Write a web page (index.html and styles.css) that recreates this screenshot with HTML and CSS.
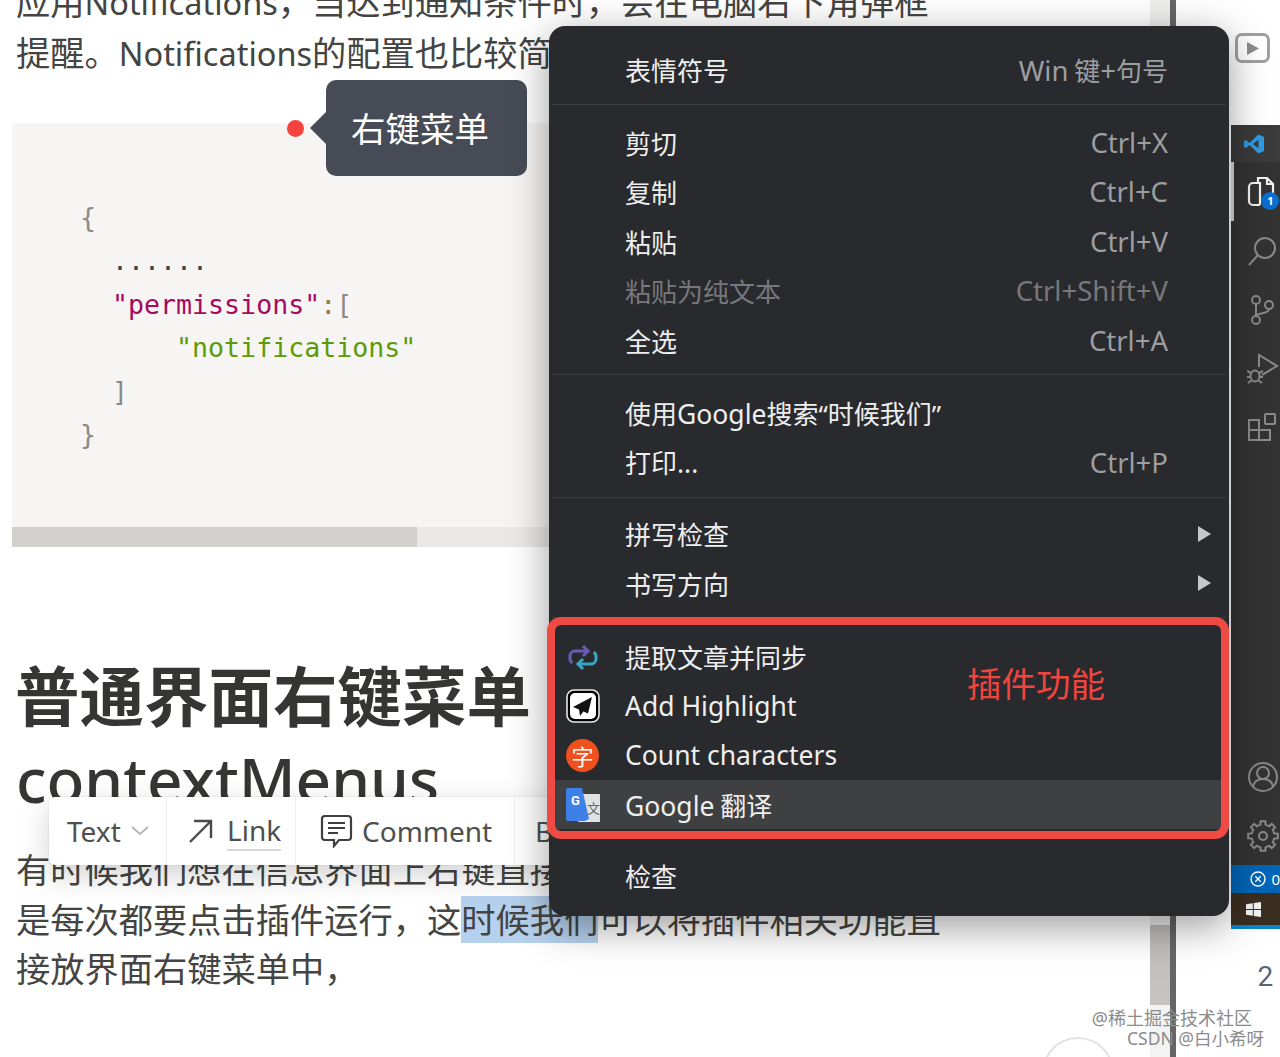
FILE: index.html
```html
<!DOCTYPE html>
<html lang="zh-CN">
<head>
    <meta charset="UTF-8">
    <meta name="viewport" content="width=device-width, initial-scale=1.0">
    <title>普通界面右键菜单 contextMenus</title>
    <link rel="stylesheet" href="styles.css">
</head>
<body>
    <div class="page">
        <main class="article">
            <p class="para">应用<span class="latin">Notifications</span>，当达到通知条件时，会在电脑右下角弹框<br>提醒。<span class="latin">Notifications</span>的配置也比较简单</p>

            <div class="code-block">
<pre class="code"><span class="punc">{</span>
  <span class="dots">......</span>
  <span class="key">"permissions"</span><span class="colon">:</span><span class="punc">[</span>
      <span class="str">"notifications"</span>
  <span class="punc">]</span>
<span class="punc">}</span></pre>
                <div class="code-scroll"><div class="code-thumb"></div></div>
            </div>

            <h2 class="title">普通界面右键菜单<br><span class="title-en">contextMenus</span></h2>

            <p class="para para-last">有时候我们想在信息界面上右键直接<br>是每次都要点击插件运行，这<span class="selected">时候我们</span>可以将插件相关功能直<br>接放界面右键菜单中，</p>
        </main>

        <div class="page-scroll"></div>
        <div class="divider"></div>

        <aside class="side">
            <div class="side-top">
                <div class="play-btn"><svg width="12" height="13" viewBox="0 0 12 13"><path d="M0 0l12 6.500-12 6.500z" fill="#8d8d8d"/></svg></div>
            </div>

            <nav class="vs-bar">
                <div class="vs-logo">
                    <svg width="20" height="20" viewBox="0 0 20 20"><path d="M14.5 0.5L20 3v14l-5.500 2.500L5.500 11 1.800 14 0 13V7l1.800-1 3.700 3zM14.500 5.500L9 10l5.500 4.500z" fill="#2f9be6"/></svg>
                </div>
                <div class="vs-icon vs-icon-active">
                    <svg width="28" height="32" viewBox="0 0 28 32" fill="none" stroke="#f2f2f2" stroke-width="2.200"><path d="M11 6V2h9l6 6v15H16"/><path d="M20 2v6h6"/><path d="M6 7h7v2a2 2 0 0 0 0 0v18a2 2 0 0 1-2 2H6a4 4 0 0 1-4-4V11a4 4 0 0 1 4-4z" fill="#333"/></svg>
                    <span class="vs-badge">1</span>
                </div>
                <div class="vs-icon">
                    <svg width="30" height="30" viewBox="0 0 30 30" fill="none" stroke="#8a8a8a" stroke-width="2"><circle cx="18" cy="12" r="10"/><path d="M11 19L2 29"/></svg>
                </div>
                <div class="vs-icon">
                    <svg width="30" height="30" viewBox="0 0 30 30" fill="none" stroke="#8a8a8a" stroke-width="2"><circle cx="9" cy="5" r="4"/><circle cx="9" cy="25" r="4"/><circle cx="22" cy="10" r="4"/><path d="M9 9v12M22 14c0 5-13 4-13 7"/></svg>
                </div>
                <div class="vs-icon">
                    <svg width="32" height="32" viewBox="0 0 32 32" fill="none" stroke="#8a8a8a" stroke-width="2"><path d="M12 14V2l18 11-15 9"/><ellipse cx="8" cy="23" rx="4.500" ry="5.500"/><path d="M0 18l4 2M0 24h4M1 30l4-3M16 18l-4 2M16 24h-4M15 30l-4-3"/></svg>
                </div>
                <div class="vs-icon">
                    <svg width="30" height="30" viewBox="0 0 30 30" fill="none" stroke="#8a8a8a" stroke-width="2"><path d="M2 7h10v20H2zM2 17h21v10H12"/><path d="M12 17V7"/><rect x="18" y="1" width="10" height="10" rx="1"/></svg>
                </div>
                <div class="vs-spacer"></div>
                <div class="vs-icon">
                    <svg width="32" height="32" viewBox="0 0 32 32" fill="none" stroke="#8a8a8a" stroke-width="2"><circle cx="16" cy="16" r="14"/><circle cx="16" cy="12" r="6"/><path d="M6 26c1-6 5-8 10-8s9 2 10 8"/></svg>
                </div>
                <div class="vs-icon">
                    <svg width="32" height="32" viewBox="0 0 32 32" fill="none" stroke="#8a8a8a" stroke-width="2">
                        <circle cx="16" cy="16" r="4"/>
                        <path id="gear-tooth" d="M11.600 5.380L13.410 4.800 13.650 1.200H18.350L18.590 4.800 20.400 5.380"/>
                        <use href="#gear-tooth" transform="rotate(45 16 16)"/>
                        <use href="#gear-tooth" transform="rotate(90 16 16)"/>
                        <use href="#gear-tooth" transform="rotate(135 16 16)"/>
                        <use href="#gear-tooth" transform="rotate(180 16 16)"/>
                        <use href="#gear-tooth" transform="rotate(225 16 16)"/>
                        <use href="#gear-tooth" transform="rotate(270 16 16)"/>
                        <use href="#gear-tooth" transform="rotate(315 16 16)"/>
                    </svg>
                </div>
                <div class="vs-status">
                    <svg width="16" height="16" viewBox="0 0 16 16" fill="none" stroke="#fff" stroke-width="1.400"><circle cx="8" cy="8" r="7"/><path d="M5.300 5.300l5.400 5.400M10.700 5.300l-5.400 5.400"/></svg>
                    <span>0</span>
                </div>
                <div class="vs-os">
                    <svg width="15" height="15" viewBox="0 0 15 15"><path d="M0 2.200L6.800 1.200V7H0zM7.800 1L15 0v7H7.800zM0 8h6.800v5.800L0 12.800zM7.800 8H15v7l-7.200-1z" fill="#f4f4f4"/></svg>
                </div>
            </nav>

            <div class="line-no">2</div>
            <div class="watermark">
                <div class="wm-first">@稀土掘金技术社区</div>
                <div>CSDN @白小希呀</div>
            </div>
        </aside>
    </div>

    <div class="avatar-ring"></div>

    <div class="tip-dot"></div>
    <div class="tip">右键菜单</div>

    <div class="toolbar">
        <div class="tb-item tb-text">Text
            <svg width="18" height="10" viewBox="0 0 18 10" fill="none" stroke="#b5b5b3" stroke-width="1.800"><path d="M1 1l8 7 8-7"/></svg>
        </div>
        <div class="tb-item tb-link">
            <svg width="26" height="26" viewBox="0 0 26 26" fill="none" stroke="#4a4a48" stroke-width="2.400"><path d="M2 24L23 3M6 3h17v17"/></svg>
            <span class="tb-underline">Link</span>
        </div>
        <div class="tb-item tb-comment">
            <svg width="33" height="34" viewBox="0 0 33 34" fill="none" stroke="#3f3f3d" stroke-width="2.200"><path d="M5 2h23a3 3 0 0 1 3 3v18a3 3 0 0 1-3 3h-9l-5 6v-6H5a3 3 0 0 1-3-3V5a3 3 0 0 1 3-3z"/><path d="M8 9h17M8 14h17M8 19h10"/></svg>
            Comment
        </div>
        <div class="tb-item tb-bold">B</div>
    </div>

    <div class="menu">
        <div class="menu-row"><span>表情符号</span><span class="keys"><span class="en">Win</span> 键<span class="en">+</span>句号</span></div>
        <div class="menu-sep"></div>
        <div class="menu-row"><span>剪切</span><span class="keys en">Ctrl+X</span></div>
        <div class="menu-row"><span>复制</span><span class="keys en">Ctrl+C</span></div>
        <div class="menu-row"><span>粘贴</span><span class="keys en">Ctrl+V</span></div>
        <div class="menu-row is-disabled"><span>粘贴为纯文本</span><span class="keys en">Ctrl+Shift+V</span></div>
        <div class="menu-row"><span>全选</span><span class="keys en">Ctrl+A</span></div>
        <div class="menu-sep"></div>
        <div class="menu-row"><span>使用<span class="en">Google</span>搜索<span class="quote">“</span>时候我们<span class="quote">”</span></span></div>
        <div class="menu-row"><span>打印<span class="en">...</span></span><span class="keys en">Ctrl+P</span></div>
        <div class="menu-sep menu-sep-tight"></div>
        <div class="menu-row has-sub"><span>拼写检查</span><i class="arrow"></i></div>
        <div class="menu-row has-sub"><span>书写方向</span><i class="arrow"></i></div>
        <div class="menu-sep menu-sep-plugin"></div>
        <div class="menu-row">
            <svg class="row-icon" width="34" height="34" viewBox="0 0 34 34" fill="none" stroke-width="3"><path d="M20 11H9a5 5 0 0 0-5 5v3a4 4 0 0 0 2.500 3.700" stroke="#6a5bb5"/><path d="M17 6l5 5-5 5" stroke="#6a5bb5"/><path d="M14 24h11a5 5 0 0 0 5-5v-3a4 4 0 0 0-2.500-3.700" stroke="#38a6c6"/><path d="M17 19l-5 5 5 5" stroke="#38a6c6"/></svg>
            <span>提取文章并同步</span>
        </div>
        <div class="menu-row">
            <svg class="row-icon" width="34" height="34" viewBox="0 0 34 34"><rect x="1" y="1" width="32" height="32" rx="7" fill="#000" stroke="#e8e8e8" stroke-width="1.600"/><rect x="4" y="4" width="26" height="26" rx="5" fill="#fff"/><path d="M26 8L7 18l6 2.500 1 6.500 3.500-4.500 4.500 2z" fill="#111"/></svg>
            <span class="en">Add Highlight</span>
        </div>
        <div class="menu-row">
            <span class="row-icon badge-zi">字</span>
            <span class="en">Count characters</span>
        </div>
        <div class="menu-row is-hover">
            <svg class="row-icon" width="34" height="34" viewBox="0 0 34 34"><rect x="12" y="6" width="22" height="28" rx="1" fill="#dfe1e3"/><path d="M2 0h14l7 31-4 2H2a2 2 0 0 1-2-2V2a2 2 0 0 1 2-2z" fill="#3f7fe8"/><text x="5" y="17" class="gt-g">G</text><text x="21" y="25" class="gt-w">文</text></svg>
            <span><span class="en">Google</span> 翻译</span>
        </div>
        <div class="menu-sep menu-sep-last"></div>
        <div class="menu-row"><span>检查</span></div>
    </div>

    <div class="plugin-box"><span class="plugin-label">插件功能</span></div>
</body>
</html>
```
FILE: styles.css
```css
* {
    margin: 0;
    padding: 0;
    box-sizing: border-box;
}

body {
    width: 1280px;
    height: 1057px;
    overflow: hidden;
    position: relative;
    background: #fff;
    font-family: "Noto Sans", "Noto Sans CJK SC", sans-serif;
    color: #444442;
}

.page {
    display: flex;
    height: 1057px;
}

/* article column */
.article {
    width: 1151px;
    margin-top: -23px;
    white-space: nowrap;
    overflow: hidden;
}

.para {
    padding-left: 16px;
    font-size: 34.25px;
    line-height: 49.5px;
}

.latin {
    font-size: 32.5px;
}

.code-block {
    margin: 45px 0 0 12px;
    background: #f6f5f3;
}

.code {
    padding: 72.500px 0 70px 68px;
    font-family: "DejaVu Sans Mono", monospace;
    font-size: 26.6px;
    line-height: 43.6px;
    color: #333;
}

.punc { color: #8a8a88; }
.dots { color: #444; }
.key { color: #a50a62; }
.colon { color: #8a7a50; }
.str { color: #5c9a08; }

.code-scroll {
    height: 20px;
    background: #eae9e7;
}

.code-thumb {
    width: 405px;
    height: 20px;
    background: #d1d0cc;
}

.title {
    margin: 108px 0 0 15px;
    font-size: 64.500px;
    line-height: 82px;
    font-weight: 700;
    color: #353533;
}

.title-en {
    margin-left: 1px;
    font-size: 62px;
    font-weight: 500;
}

.para-last {
    margin-top: 25px;
}

.selected {
    background: #b6d1ee;
}

/* strip to the right of the article */
.page-scroll {
    width: 20px;
    background: linear-gradient(#efefee 0, #efefee 925px, #bdbcb8 925px, #c6c5c1 1005px, #f3f3f2 1005px);
}

.divider {
    width: 6px;
    background: #666;
}

.side {
    flex: 1;
    position: relative;
    background: #fff;
}

.side-top {
    height: 125px;
    padding: 33px 0 0 59px;
}

.play-btn {
    width: 35px;
    height: 30px;
    border: 3px solid #a0a0a0;
    border-radius: 7px;
    display: flex;
    align-items: center;
    justify-content: center;
}

.vs-bar {
    margin-left: 55px;
    height: 800px;
    display: flex;
    flex-direction: column;
    align-items: center;
    background: #333;
    box-shadow: 0 4px 0 #0a84d0;
}

.vs-logo {
    width: 100%;
    height: 37px;
    flex: none;
    background: #3b3b3b;
    display: flex;
    align-items: center;
    justify-content: center;
    padding-right: 4px;
}

.vs-icon {
    position: relative;
    width: 100%;
    height: 59px;
    flex: none;
    display: flex;
    align-items: center;
    padding-left: 16px;
}

.vs-icon-active {
    box-shadow: inset 3px 0 0 #d8d8d8;
}

.vs-badge {
    position: absolute;
    left: 30px;
    top: 30px;
    width: 18px;
    height: 18px;
    border-radius: 50%;
    background: #0a6fd0;
    color: #fff;
    font-size: 11px;
    font-weight: 700;
    line-height: 18px;
    text-align: center;
}

.vs-spacer {
    flex: 1;
}

.vs-status {
    width: 100%;
    height: 28px;
    flex: none;
    background: #0066b8;
    color: #fff;
    font-size: 15px;
    display: flex;
    align-items: center;
    gap: 5px;
    padding-left: 19px;
}

.vs-os {
    width: 100%;
    height: 32px;
    flex: none;
    background: #3a2e20;
    display: flex;
    align-items: center;
    padding-left: 15px;
}

.line-no {
    position: absolute;
    left: 81px;
    top: 960px;
    font-family: "Roboto", sans-serif;
    font-size: 28px;
    color: #56657a;
}

.watermark {
    position: absolute;
    right: 16px;
    top: 1008px;
    font-size: 17.500px;
    line-height: 20px;
    color: #8b8b8b;
    text-align: right;
    white-space: nowrap;
}

.wm-first {
    padding-right: 12px;
    font-size: 18px;
}

.avatar-ring {
    position: absolute;
    left: 1042px;
    top: 1037px;
    width: 72px;
    height: 72px;
    border: 2px solid #e2e2e2;
    border-radius: 50%;
}

/* things that float over the article */
.tip-dot {
    position: absolute;
    left: 287px;
    top: 120px;
    width: 17px;
    height: 17px;
    border-radius: 50%;
    background: #f4433c;
}

.tip {
    position: absolute;
    left: 326px;
    top: 80px;
    width: 201px;
    height: 96px;
    border-radius: 10px;
    background: #474b55;
    color: #fff;
    font-size: 34.500px;
    line-height: 98px;
    padding-left: 25px;
}

.tip::before {
    content: "";
    position: absolute;
    left: -16px;
    top: 32px;
    border: 16px solid transparent;
    border-left-width: 0;
    border-right-color: #474b55;
}

.toolbar {
    position: absolute;
    left: 49px;
    top: 797px;
    width: 520px;
    height: 68px;
    display: flex;
    background: #fff;
    border-radius: 6px;
    box-shadow: 0 10px 30px rgba(0, 0, 0, 0.18), 0 0 2px rgba(0, 0, 0, 0.12);
    font-size: 28px;
    color: #4f4f4d;
}

.tb-item {
    display: flex;
    align-items: center;
    border-right: 1.500px solid #eeeeec;
    height: 100%;
}

.tb-text { width: 118px; padding-left: 18px; gap: 10px; }
.tb-link { width: 129px; padding-left: 21px; gap: 13px; }
.tb-comment { width: 219px; padding-left: 24px; gap: 9px; }
.tb-bold { padding-left: 20px; border-right: 0; }

.tb-underline {
    border-bottom: 2px solid #d8d8d6;
    line-height: 37px;
}

.menu {
    position: absolute;
    left: 549px;
    top: 26px;
    width: 680px;
    height: 890px;
    padding-top: 19px;
    background: #292a2d;
    border-radius: 16px;
    box-shadow: 0 10px 40px rgba(0, 0, 0, 0.4);
    font-family: "Noto Sans CJK SC", sans-serif;
    font-size: 26px;
    color: #eeeeee;
}

.menu-row {
    position: relative;
    height: 49.400px;
    padding: 0 61px 0 76px;
    display: flex;
    align-items: center;
    justify-content: space-between;
    white-space: nowrap;
}

.menu-sep {
    height: 1px;
    margin: 9.500px 3px 13px;
    background: #3d3e41;
}

.menu-sep-tight {
    margin-bottom: 11.500px;
}

.menu-sep-plugin {
    margin-bottom: 13.500px;
}

.menu-sep-last {
    margin: 8px 0 12.500px;
    background: transparent;
}

.en {
    font-family: "Noto Sans", sans-serif;
    font-size: 26.500px;
}

.keys.en,
.keys .en {
    font-size: 27.500px;
}

.quote {
    font-family: "Noto Sans", sans-serif;
}

.keys {
    color: #9d9ea1;
}

.is-disabled,
.is-disabled .keys {
    color: #77787b;
}

.is-hover {
    background: #3f4042;
}

.arrow {
    position: absolute;
    right: 18px;
    border: 8px solid transparent;
    border-right-width: 0;
    border-left: 13px solid #c8c8c8;
}

.row-icon {
    position: absolute;
    left: 17px;
    top: 8px;
}

.badge-zi {
    width: 33px;
    height: 33px;
    border-radius: 50%;
    background: #f0501e;
    color: #fff;
    font-size: 22px;
    line-height: 32px;
    text-align: center;
}

.gt-g {
    font-family: "Roboto", sans-serif;
    font-size: 13px;
    font-weight: 700;
    fill: #fff;
}

.gt-w {
    font-size: 13px;
    fill: #666;
}

.plugin-box {
    position: absolute;
    left: 547px;
    top: 617px;
    width: 682px;
    height: 222px;
    border: 8px solid #f04a45;
    border-radius: 14px;
    pointer-events: none;
}

.plugin-label {
    position: absolute;
    left: 412px;
    top: 34px;
    font-family: "Noto Sans CJK SC", sans-serif;
    font-size: 34.500px;
    line-height: 46px;
    color: #f0453f;
}
```
